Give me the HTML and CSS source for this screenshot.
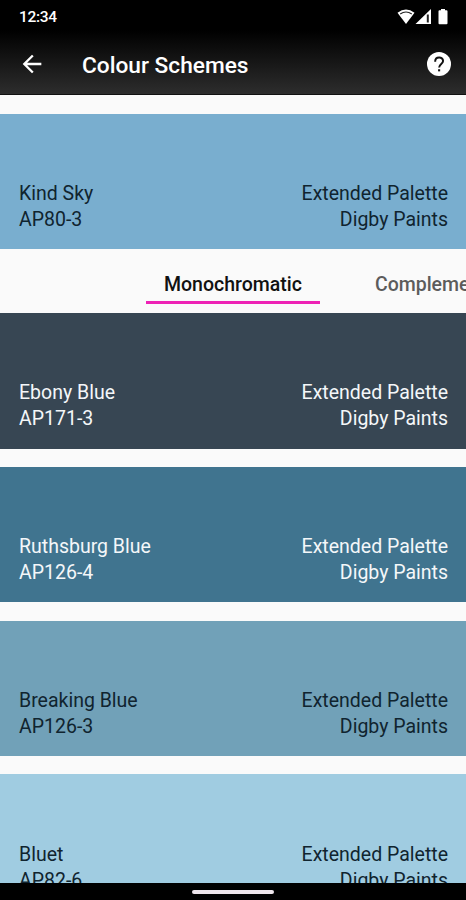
FILE: index.html
```html
<!DOCTYPE html>
<html lang="en">
<head>
    <meta charset="UTF-8">
    <meta name="viewport" content="width=device-width, initial-scale=1.0">
    <title>Colour Schemes</title>
    <link rel="stylesheet" href="styles.css">
</head>
<body>
    <div class="screen">
        <header class="header">
            <div class="status-bar">
                <span class="time">12:34</span>
                <svg class="status-icons" width="51" height="18" viewBox="0 0 51 18">
                    <path d="M.5 4.800Q9-1.800 17.500 4.800L9 16Z" fill="#fff"/>
                    <path d="M3.200 6Q9 2 14.800 6" fill="none" stroke="#222" stroke-width="1.100"/>
                    <path d="M18.500 16L34 1V16Z" fill="#fff"/>
                    <path d="M30.800 6.500V14.500" stroke="#222" stroke-width="2"/>
                    <path d="M44 1h4v1.300h1.500q1 0 1 1v12q0 1-1 1h-7q-1 0-1-1V3.300q0-1 1-1H44z" fill="#fff"/>
                </svg>
            </div>
            <div class="app-bar">
                <svg class="back" width="28" height="28" viewBox="0 0 24 24">
                    <path d="M20 11H7.830l5.590-5.590L12 4l-8 8 8 8 1.410-1.410L7.830 13H20v-2z" fill="#fff"/>
                </svg>
                <h1 class="title">Colour Schemes</h1>
                <svg class="help" width="28" height="28" viewBox="0 0 24 24">
                    <circle cx="12" cy="12" r="10.300" fill="#fff"/>
                    <path d="M8.700 10C8.700 5.300 15.500 5.500 15.500 9.400C15.500 11.900 12.100 12 12.100 15" fill="none" stroke="#111" stroke-width="1.700"/>
                    <path d="M11.200 16.500h1.800v1.800h-1.800z" fill="#111"/>
                </svg>
            </div>
        </header>

        <main class="content">
            <div class="swatch kind-sky">
                <div>Kind Sky<br>AP80-3</div>
                <div class="right">Extended Palette<br>Digby Paints</div>
            </div>

            <nav class="tabs">
                <div class="tab active">Monochromatic</div>
                <div class="tab">Complementary</div>
            </nav>

            <div class="schemes">
                <div class="swatch ebony-blue">
                    <div>Ebony Blue<br>AP171-3</div>
                    <div class="right">Extended Palette<br>Digby Paints</div>
                </div>
                <div class="swatch ruthsburg-blue">
                    <div>Ruthsburg Blue<br>AP126-4</div>
                    <div class="right">Extended Palette<br>Digby Paints</div>
                </div>
                <div class="swatch breaking-blue">
                    <div>Breaking Blue<br>AP126-3</div>
                    <div class="right">Extended Palette<br>Digby Paints</div>
                </div>
                <div class="swatch bluet">
                    <div>Bluet<br>AP82-6</div>
                    <div class="right">Extended Palette<br>Digby Paints</div>
                </div>
            </div>
        </main>

        <footer class="nav-bar">
            <div class="handle"></div>
        </footer>
    </div>
</body>
</html>
```
FILE: styles.css
```css
* {
    box-sizing: border-box;
}
body {
    margin: 0;
    font-family: Roboto, sans-serif;
    background-color: #fafafa;
}
.screen {
    display: flex;
    flex-direction: column;
    height: 900px;
    overflow: hidden;
}

/* header */
.header {
    flex: none;
    height: 95px;
    color: #fff;
    background: linear-gradient(#000 32%, #2d2d2d);
    border-bottom: 1px solid #111;
}
.status-bar {
    display: flex;
    justify-content: space-between;
    align-items: center;
    height: 34px;
    padding: 0 18px 0 19px;
}
.time {
    font-size: 15.500px;
    font-weight: 500;
    letter-spacing: -0.300px;
}
.app-bar {
    display: flex;
    align-items: center;
    height: 60px;
    padding: 0 13px 0 18px;
}
.title {
    flex: 1;
    margin: 2px 0 0 36px;
    font-size: 22.700px;
    font-weight: 500;
}

/* colours */
.content {
    flex: 1;
    min-height: 0;
    padding-top: 18.5px;
    overflow: hidden;
}
.swatch {
    display: flex;
    justify-content: space-between;
    align-items: flex-end;
    height: 135.5px;
    padding: 0 18px 16.300px 19px;
    font-size: 19.5px;
    line-height: 26px;
    color: #10242f;
}
.right {
    text-align: right;
}
.kind-sky {
    background-color: #79aecf;
}
.ebony-blue {
    background-color: #374653;
    color: #f4f7f9;
}
.ruthsburg-blue {
    background-color: #40748f;
    color: #f4f7f9;
}
.breaking-blue {
    background-color: #71a1b8;
}
.bluet {
    background-color: #a0cce1;
}
.schemes {
    display: flex;
    flex-direction: column;
    gap: 18.3px;
}
.schemes .swatch {
    flex: none;
}

/* tabs */
.tabs {
    display: flex;
    gap: 37px;
    height: 64px;
    padding: 18px 0 9.500px 146px;
    overflow: hidden;
}
.tab {
    flex: none;
    padding: 5px 18px 0;
    font-size: 19.5px;
    font-weight: 500;
    line-height: 26px;
    color: #5c5c5c;
}
.tab.active {
    color: #111;
    border-bottom: 3px solid #ee22b5;
}

/* gesture bar */
.nav-bar {
    flex: none;
    display: flex;
    justify-content: center;
    align-items: center;
    height: 17px;
    background-color: #000;
}
.handle {
    width: 82px;
    height: 4px;
    border-radius: 2px;
    background-color: #eee6ec;
}
```
